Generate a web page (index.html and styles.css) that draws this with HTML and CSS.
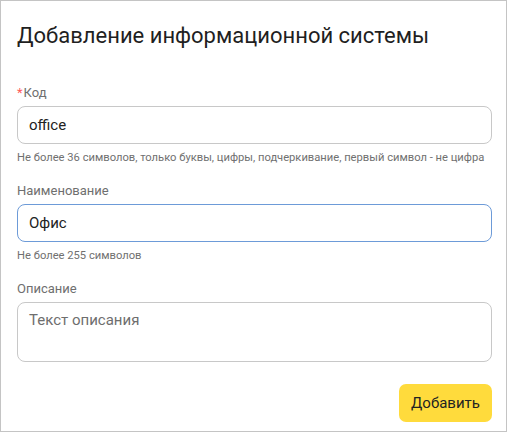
FILE: index.html
```html
<!DOCTYPE html>
<html lang="ru">
<head>
<meta charset="utf-8">
<link rel="stylesheet" href="styles.css">
</head>
<body>
<form class="dialog">
  <h1 class="title">Добавление информационной системы</h1>
  <div class="field first">
    <label class="label" for="code"><span class="req">*</span>Код</label>
    <input class="input" id="code" type="text" value="office">
    <div class="hint">Не более 36 символов, только буквы, цифры, подчеркивание, первый символ - не цифра</div>
  </div>
  <div class="field">
    <label class="label" for="name">Наименование</label>
    <input class="input focused" id="name" type="text" value="Офис">
    <div class="hint">Не более 255 символов</div>
  </div>
  <div class="field">
    <label class="label" for="desc">Описание</label>
    <textarea class="input textarea" id="desc" placeholder="Текст описания"></textarea>
  </div>
  <div class="actions">
    <button class="btn" type="button">Добавить</button>
  </div>
</form>
</body>
</html>
```
FILE: styles.css
```css
html, body {
  margin: 0;
  padding: 0;
  background: #fff;
}
body {
  font-family: Roboto, "Noto Sans", sans-serif;
  color: #222;
}
.dialog {
  box-sizing: border-box;
  width: 507px;
  height: 432px;
  margin: 0;
  border: 1px solid #c4c4c4;
  padding: 20px 14px 0 16px;
  display: flex;
  flex-direction: column;
}
.title {
  margin: 0;
  font-size: 22px;
  font-weight: 400;
  line-height: 30px;
  color: #1f1f1f;
}
.field {
  display: flex;
  flex-direction: column;
}
.field.first { margin-top: 32px; }
.label {
  font-size: 13px;
  line-height: 20px;
  color: #6f6f6f;
  margin-bottom: 3px;
}
.req { color: #ff5a5a; margin-right: 1px; }
.input {
  box-sizing: border-box;
  display: block;
  width: 100%;
  height: 38px;
  margin: 0;
  border: 1px solid #c8c8c8;
  border-radius: 8px;
  padding: 0 11px;
  font-family: Roboto, "Noto Sans", sans-serif;
  font-size: 15px;
  line-height: 36px;
  color: #222;
  background: #fff;
  outline: none;
}
.input.focused {
  border-color: #6d9bd8;
}
.input.textarea {
  height: 60px;
  line-height: 20px;
  padding: 7px 11px 0 11px;
  resize: none;
  overflow: hidden;
}
.input.textarea::placeholder { color: #6e6e6e; opacity: 1; }
.hint {
  font-size: 11.2px;
  line-height: 16px;
  color: #707070;
  margin-top: 6px;
  margin-bottom: 15px;
  white-space: nowrap;
}
.actions {
  display: flex;
  justify-content: flex-end;
  margin-top: 22px;
}
.btn {
  font-family: Roboto, "Noto Sans", sans-serif;
  font-size: 15px;
  color: #222;
  background: #ffdb3c;
  border: none;
  border-radius: 7px;
  height: 38px;
  width: 93px;
  padding: 0;
}
```
